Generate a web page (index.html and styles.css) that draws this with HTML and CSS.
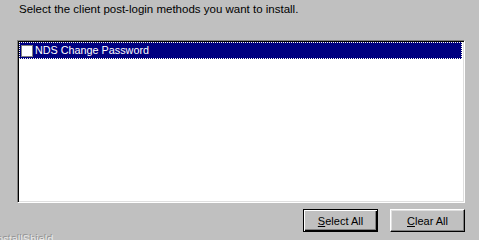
FILE: index.html
```html
<!DOCTYPE html>
<html>
<head>
<meta charset="utf-8">
<link rel="stylesheet" href="styles.css">
</head>
<body>
<div class="page">
  <p class="prompt">Select the client post-login methods you want to install.</p>
  <div class="listbox">
    <div class="item selected">
      <span class="check"></span>
      <span class="label">NDS Change Password</span>
    </div>
  </div>
  <div class="buttons">
    <button class="btn default"><span class="u">S</span>elect All</button>
    <button class="btn"><span class="u">C</span>lear All</button>
  </div>
  <div class="footer">InstallShield</div>
</div>
</body>
</html>
```
FILE: styles.css
```css
html, body {
  margin: 0;
  padding: 0;
  background: #c0c0c0;
  overflow: hidden;
}
.page {
  width: 479px;
  height: 240px;
  overflow: hidden;
  font-family: "Liberation Sans", Arial, sans-serif;
  font-size: 11px;
  color: #000;
}
.prompt {
  margin: 0;
  padding: 3px 0 0 19px;
  line-height: 13px;
  height: 13px;
  font-size: 11.5px;
}
.listbox {
  margin: 24px 0 0 17px;
  width: 448px;
  height: 163px;
  box-sizing: border-box;
  background: #fff;
  border-style: solid;
  border-width: 1px;
  border-color: #808080 #fff #fff #808080;
  box-shadow: inset 1px 1px 0 #000, inset -1px -1px 0 #dfdfdf;
  padding: 1px 2px 1px 1px;
}
.item {
  display: flex;
  align-items: center;
  height: 17px;
  box-sizing: border-box;
  padding-left: 1px;
}
.item.selected {
  background: #000080;
  border: 1px dotted #fffff0;
  color: #fff;
}
.check {
  width: 12px;
  height: 12px;
  box-sizing: border-box;
  background: #fff;
  border: 1px solid #808080;
  margin-right: 2px;
}
.label {
  line-height: 13px;
  font-size: 10.8px;
}
.buttons {
  display: flex;
  justify-content: flex-end;
  gap: 12px;
  margin-top: 6px;
  padding-right: 14px;
}
.btn {
  width: 75px;
  height: 23px;
  box-sizing: border-box;
  font-family: "Liberation Sans", Arial, sans-serif;
  font-size: 11px;
  color: #000;
  background: #c0c0c0;
  border-style: solid;
  border-width: 1px;
  border-color: #fff #000 #000 #fff;
  box-shadow: inset -1px -1px 0 #808080, inset 1px 1px 0 #dfdfdf;
  padding: 0;
  margin: 0;
}
.btn.default {
  border: 1px solid #000;
  box-shadow: inset 1px 1px 0 #fff, inset -1px -1px 0 #000, inset -2px -2px 0 #808080;
}
.u {
  text-decoration: underline;
}
.footer {
  margin: 1px 0 0 -6px;
  line-height: 13px;
  color: #e8e8e8;
  text-shadow: -1px -1px 0 #909090;
}
```
